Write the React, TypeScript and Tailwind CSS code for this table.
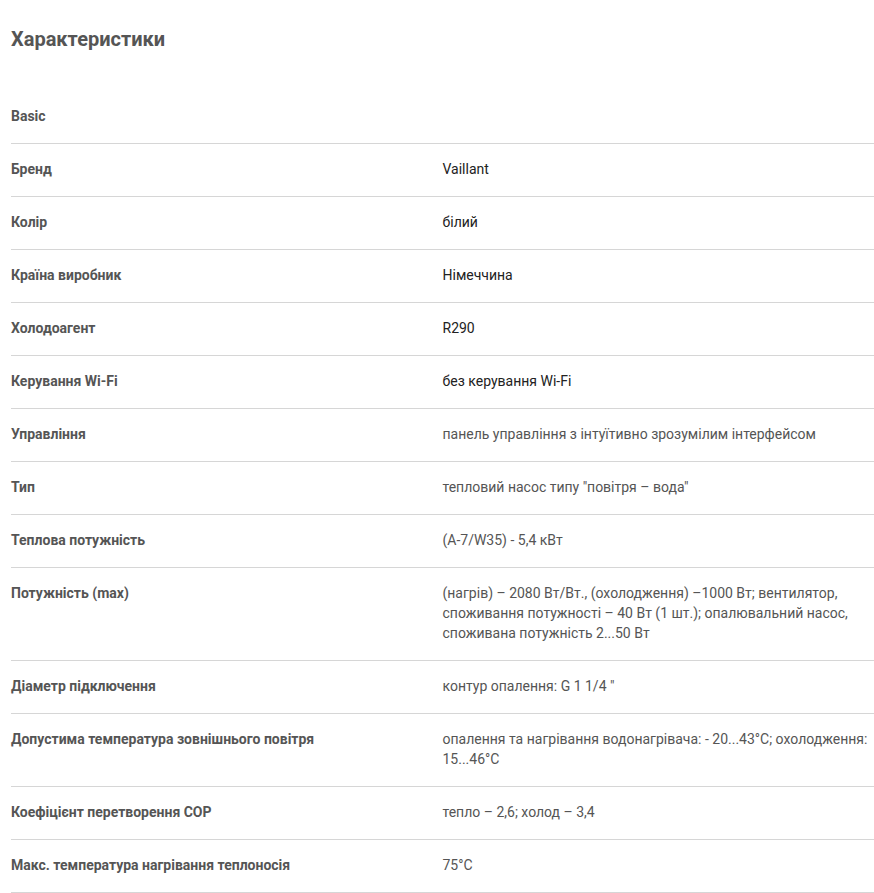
// Таблиця характеристик товару: заголовок і рядки "назва / значення".
interface Spec {
  label: string;
  value?: string;
  dark?: boolean;
}

const specs: Spec[] = [
  { label: 'Basic' },
  { label: 'Бренд', value: 'Vaillant', dark: true },
  { label: 'Колір', value: 'білий', dark: true },
  { label: 'Країна виробник', value: 'Німеччина', dark: true },
  { label: 'Холодоагент', value: 'R290', dark: true },
  { label: 'Керування Wi-Fi', value: 'без керування Wi-Fi', dark: true },
  { label: 'Управління', value: 'панель управління з інтуїтивно зрозумілим інтерфейсом' },
  { label: 'Тип', value: 'тепловий насос типу "повітря – вода"' },
  { label: 'Теплова потужність', value: '(A-7/W35) - 5,4 кВт' },
  {
    label: 'Потужність (max)',
    value:
      '(нагрів) – 2080 Вт/Вт., (охолодження) –1000 Вт; вентилятор, споживання потужності – 40 Вт (1 шт.); опалювальний насос, споживана потужність 2...50 Вт',
  },
  { label: 'Діаметр підключення', value: 'контур опалення: G 1 1/4 "' },
  {
    label: 'Допустима температура зовнішнього повітря',
    value: 'опалення та нагрівання водонагрівача: - 20...43°C; охолодження: 15...46°C',
  },
  { label: 'Коефіцієнт перетворення COP', value: 'тепло – 2,6; холод – 3,4' },
  { label: 'Макс. температура нагрівання теплоносія', value: '75°C' },
];

export default function App() {
  return (
    <div className="min-h-[893px] bg-white pl-[11px] pt-[27px] font-['Roboto',sans-serif]">
      <h2 className="text-[20px] font-bold leading-[24px] text-[#555]">Характеристики</h2>

      <div className="mt-[40px]">
        {specs.map((s, i) => (
          <div
            key={i}
            className={
              i === 0
                ? 'grid grid-cols-2 pt-[15px] pb-[17px] text-[14px] leading-[20px]'
                : 'grid grid-cols-2 border-t border-[#d6d6d6] pt-[15px] pb-[17px] text-[14px] leading-[20px]'
            }
          >
            <div className="pr-4 font-bold text-[#555]">{s.label}</div>
            <div className={s.dark ? 'text-[#222]' : 'text-[#555]'}>{s.value}</div>
          </div>
        ))}
        <div className="border-t border-[#d6d6d6]" />
      </div>
    </div>
  );
}
